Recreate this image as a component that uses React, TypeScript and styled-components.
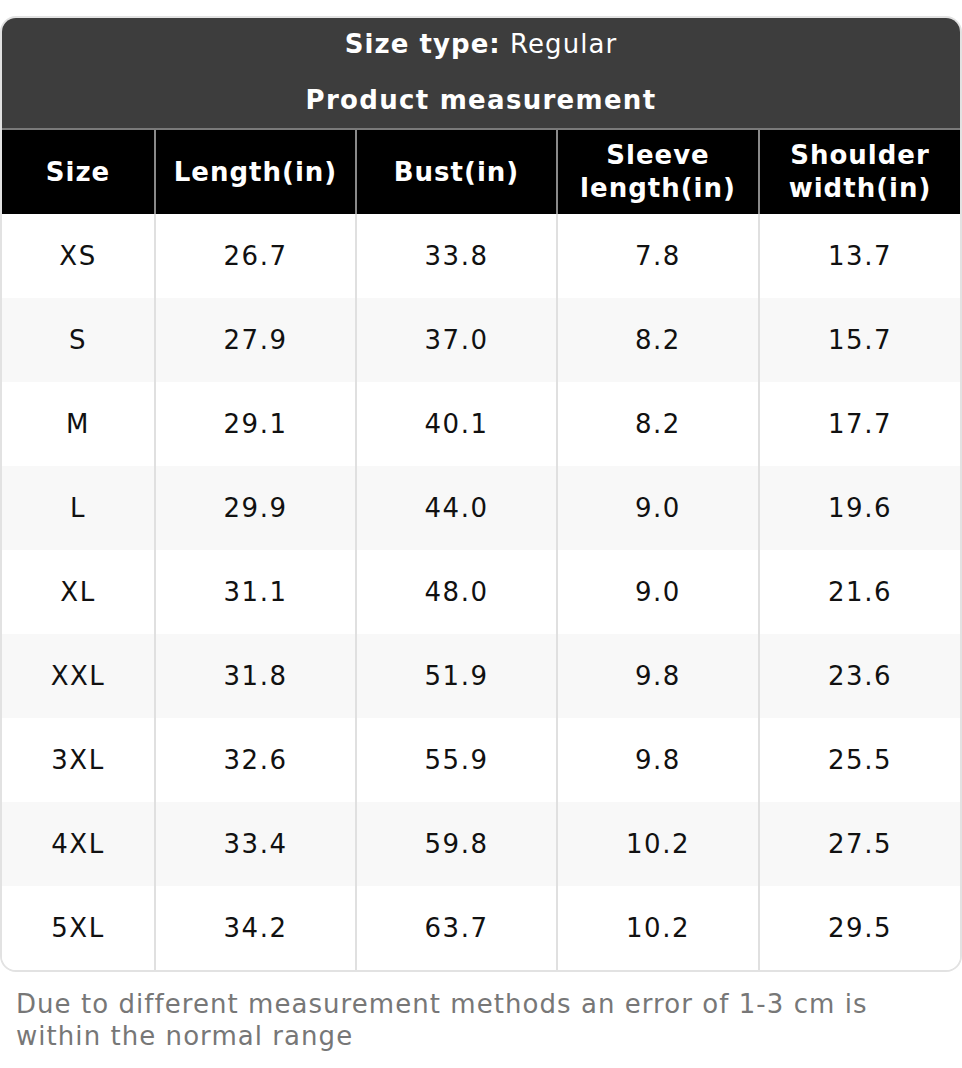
import React from "react";
import styled, { createGlobalStyle } from "styled-components";

const GlobalStyle = createGlobalStyle`
  html, body { margin: 0; padding: 0; background: #ffffff; }
  body { font-family: "DejaVu Sans", "Liberation Sans", sans-serif; }
  * { box-sizing: border-box; }
`;

const Page = styled.div`
  padding-top: 16px;
  width: 962px;
`;

const Card = styled.div`
  border: 2px solid #e2e2e2;
  border-radius: 16px;
  overflow: hidden;
`;

const TitleBar = styled.div`
  background: #3d3d3d;
  color: #ffffff;
  display: flex;
  flex-direction: column;
  align-items: center;
  border-bottom: 2px solid #7a7a7a;
  margin: -2px -2px 0 -2px;
`;

const TitleLine = styled.div<{ $bold?: boolean }>`
  height: 56px;
  display: flex;
  align-items: center;
  justify-content: center;
  font-size: 26px;
  letter-spacing: ${(p) => (p.$bold ? "1.3px" : "1.05px")};
  font-weight: ${(p) => (p.$bold ? 700 : 400)};
  b { font-weight: 700; }
`;

const Grid = styled.div`
  display: grid;
  grid-template-columns: 152px 201px 201px 202px 1fr;
`;

const HeadCell = styled.div<{ $first?: boolean }>`
  background: #000000;
  color: #ffffff;
  font-weight: 700;
  font-size: 26px;
  letter-spacing: 1px;
  line-height: 33px;
  height: 84px;
  display: flex;
  align-items: center;
  justify-content: center;
  text-align: center;
  padding: 0 12px;
  border-left: ${(p) => (p.$first ? "none" : "2px solid #8a8a8a")};
`;

const Cell = styled.div<{ $first?: boolean; $alt?: boolean }>`
  background: ${(p) => (p.$alt ? "#f8f8f8" : "#ffffff")};
  color: #111111;
  font-size: 26px;
  letter-spacing: 1.5px;
  height: 84px;
  display: flex;
  align-items: center;
  justify-content: center;
  border-left: ${(p) => (p.$first ? "none" : "2px solid #e0e0e0")};
`;

const Note = styled.p`
  margin: 16px 0 0 0;
  padding: 0 16px;
  color: #777777;
  font-size: 26px;
  letter-spacing: 1.05px;
  line-height: 32px;
`;

const headers = ["Size", "Length(in)", "Bust(in)", "Sleeve length(in)", "Shoulder width(in)"];

const rows: string[][] = [
  ["XS", "26.7", "33.8", "7.8", "13.7"],
  ["S", "27.9", "37.0", "8.2", "15.7"],
  ["M", "29.1", "40.1", "8.2", "17.7"],
  ["L", "29.9", "44.0", "9.0", "19.6"],
  ["XL", "31.1", "48.0", "9.0", "21.6"],
  ["XXL", "31.8", "51.9", "9.8", "23.6"],
  ["3XL", "32.6", "55.9", "9.8", "25.5"],
  ["4XL", "33.4", "59.8", "10.2", "27.5"],
  ["5XL", "34.2", "63.7", "10.2", "29.5"],
];

export default function App() {
  return (
    <Page>
      <GlobalStyle />
      <Card>
        <TitleBar>
          <TitleLine>
            <span>
              <b>Size type:</b> Regular
            </span>
          </TitleLine>
          <TitleLine $bold>Product measurement</TitleLine>
        </TitleBar>
        <Grid>
          {headers.map((h, i) => (
            <HeadCell key={h} $first={i === 0}>
              {h}
            </HeadCell>
          ))}
          {rows.map((r, ri) =>
            r.map((v, ci) => (
              <Cell key={`${ri}-${ci}`} $first={ci === 0} $alt={ri % 2 === 1}>
                {v}
              </Cell>
            ))
          )}
        </Grid>
      </Card>
      <Note>Due to different measurement methods an error of 1-3 cm is within the normal range</Note>
    </Page>
  );
}
